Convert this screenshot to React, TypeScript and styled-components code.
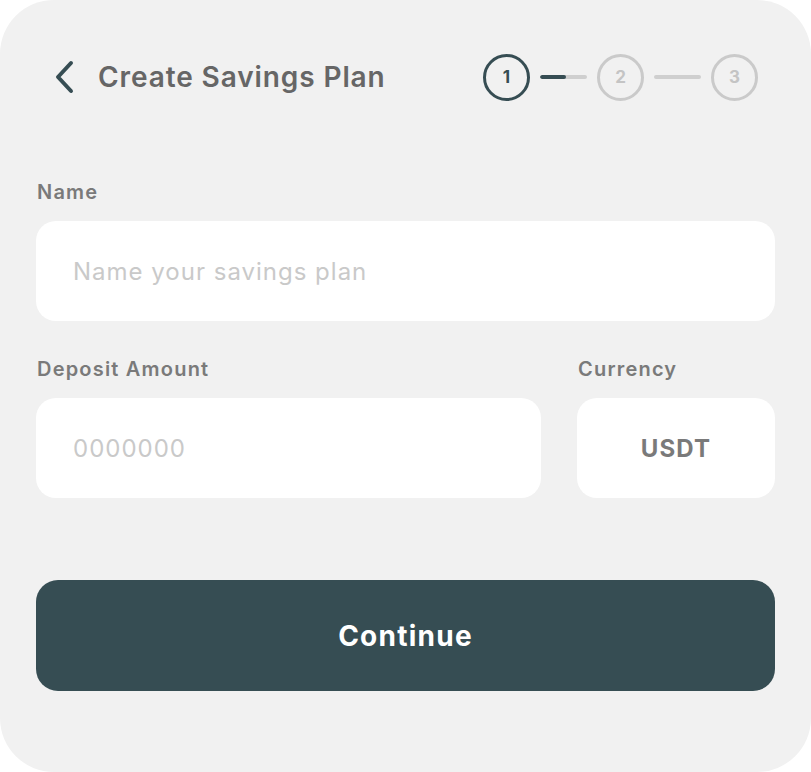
import { FC } from 'react';
import styled, { createGlobalStyle } from 'styled-components';

const GlobalStyle = createGlobalStyle`
  html, body {
    margin: 0;
    padding: 0;
    background: #ffffff;
  }
  * {
    box-sizing: border-box;
  }
`;

const Card = styled.div`
  width: 811px;
  height: 772px;
  background: #f1f1f1;
  border-radius: 54px;
  padding: 54px 36px 0;
  font-family: 'Inter', 'Liberation Sans', sans-serif;
  display: flex;
  flex-direction: column;
`;

const Header = styled.div`
  display: flex;
  align-items: center;
  justify-content: space-between;
  padding: 0 17px 0 18px;
  height: 46px;
`;

const TitleGroup = styled.div`
  display: flex;
  align-items: center;
  gap: 22px;
`;

const BackButton = styled.button`
  border: none;
  background: none;
  padding: 0;
  display: flex;
  align-items: center;
  cursor: pointer;
`;

const Title = styled.h1`
  margin: 0;
  font-size: 28px;
  font-weight: 600;
  color: #666666;
  letter-spacing: 0.9px;
`;

const Stepper = styled.div`
  display: flex;
  align-items: center;
  gap: 10px;
`;

const StepCircle = styled.div<{ $active?: boolean }>`
  width: 47px;
  height: 47px;
  border-radius: 50%;
  border: 3px solid ${({ $active }) => ($active ? '#364d53' : '#cacaca')};
  color: ${({ $active }) => ($active ? '#364d53' : '#c4c4c4')};
  display: flex;
  align-items: center;
  justify-content: center;
  font-size: 17px;
  font-weight: 700;
`;

const Connector = styled.div`
  width: 47px;
  height: 4px;
  border-radius: 2px;
  background: #cfcfcf;
  overflow: hidden;
`;

const ConnectorFill = styled.div`
  height: 100%;
  background: #364d53;
  border-radius: 2px;
`;

const Form = styled.div`
  display: flex;
  flex-direction: column;
  margin-top: 80px;
`;

const Row = styled.div`
  display: flex;
  gap: 36px;
  margin-top: 36px;
`;

const Field = styled.div<{ $width?: number }>`
  display: flex;
  flex-direction: column;
  flex: ${({ $width }) => ($width ? `0 0 ${$width}px` : '1')};
`;

const Label = styled.label`
  font-size: 20px;
  font-weight: 600;
  line-height: 24px;
  letter-spacing: 1.2px;
  color: #7a7a7a;
  margin-bottom: 17px;
  padding-left: 1px;
`;

const Input = styled.input`
  height: 100px;
  border: none;
  border-radius: 20px;
  background: #ffffff;
  padding: 0 37px;
  font-family: 'Inter', 'Liberation Sans', sans-serif;
  font-size: 24px;
  letter-spacing: 1px;
  color: #555555;
  outline: none;
  width: 100%;
  &::placeholder {
    color: #c9c9c9;
  }
`;

const CurrencyBox = styled.div`
  height: 100px;
  border-radius: 20px;
  background: #ffffff;
  display: flex;
  align-items: center;
  justify-content: center;
  font-size: 24px;
  font-weight: 700;
  letter-spacing: 1.2px;
  color: #7a7a7a;
`;

const ContinueButton = styled.button`
  margin-top: 82px;
  height: 111px;
  border: none;
  border-radius: 22px;
  background: #364d53;
  color: #ffffff;
  font-family: 'Inter', 'Liberation Sans', sans-serif;
  font-size: 28px;
  font-weight: 700;
  letter-spacing: 1.25px;
  cursor: pointer;
`;

const ChevronLeft: FC = () => (
  <svg width="22" height="34" viewBox="0 0 22 34" fill="none">
    <path d="M17 3 L4 17 L17 31" stroke="#364d53" strokeWidth="4" strokeLinecap="round" strokeLinejoin="round" />
  </svg>
);

const App: FC = () => {
  const progress = 55;

  return (
    <>
      <GlobalStyle />
      <Card>
        <Header>
          <TitleGroup>
            <BackButton aria-label="Back">
              <ChevronLeft />
            </BackButton>
            <Title>Create Savings Plan</Title>
          </TitleGroup>
          <Stepper>
            <StepCircle $active>1</StepCircle>
            <Connector>
              <ConnectorFill style={{ width: `${progress}%` }} />
            </Connector>
            <StepCircle>2</StepCircle>
            <Connector />
            <StepCircle>3</StepCircle>
          </Stepper>
        </Header>

        <Form>
          <Field>
            <Label>Name</Label>
            <Input placeholder="Name your savings plan" />
          </Field>
          <Row>
            <Field>
              <Label>Deposit Amount</Label>
              <Input placeholder="0000000" />
            </Field>
            <Field $width={198}>
              <Label>Currency</Label>
              <CurrencyBox>USDT</CurrencyBox>
            </Field>
          </Row>
        </Form>

        <ContinueButton>Continue</ContinueButton>
      </Card>
    </>
  );
};

export default App;
